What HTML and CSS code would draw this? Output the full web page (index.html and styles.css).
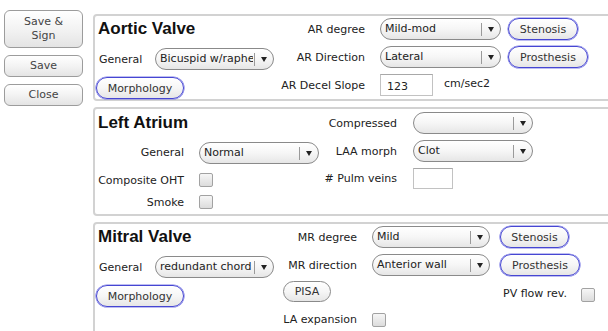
FILE: index.html
```html
<!DOCTYPE html>
<html lang="en">
<head>
    <meta charset="UTF-8">
    <meta name="viewport" content="width=device-width, initial-scale=1.0">
    <title>Echo Report</title>
    <link rel="stylesheet" href="styles.css">
</head>
<body>
    <div class="sidebar">
        <button class="side-btn tall">Save &amp;<br>Sign</button>
        <button class="side-btn">Save</button>
        <button class="side-btn">Close</button>
    </div>

    <div class="panels">
        <!-- Aortic valve -->
        <section class="panel panel-aortic">
            <div class="left">
                <h2 class="title">Aortic Valve</h2>
                <div class="field">
                    <span class="field-label">General</span>
                    <div class="select w119"><span class="value">Bicuspid w/raphe</span><span class="sep"></span><span class="arrow"></span></div>
                </div>
                <button class="pill focus morph">Morphology</button>
            </div>
            <div class="grid grid-aortic">
                <span class="lbl">AR degree</span>
                <div class="select w121"><span class="value">Mild-mod</span><span class="sep"></span><span class="arrow"></span></div>
                <button class="pill focus w70">Stenosis</button>

                <span class="lbl">AR Direction</span>
                <div class="select w121"><span class="value">Lateral</span><span class="sep"></span><span class="arrow"></span></div>
                <button class="pill focus w80">Prosthesis</button>

                <span class="lbl">AR Decel Slope</span>
                <div class="with-unit">
                    <input class="text-input w52" type="text" value="123">
                    <span class="unit">cm/sec2</span>
                </div>
            </div>
        </section>

        <!-- Left atrium -->
        <section class="panel panel-atrium">
            <div class="left left-wide">
                <h2 class="title">Left Atrium</h2>
                <div class="grid grid-atrium-left">
                    <span class="lbl lbl-top">General</span>
                    <div class="select w120 top"><span class="value">Normal</span><span class="sep"></span><span class="arrow"></span></div>

                    <span class="lbl">Composite OHT</span>
                    <span class="check"></span>

                    <span class="lbl">Smoke</span>
                    <span class="check"></span>
                </div>
            </div>
            <div class="grid grid-atrium">
                <span class="lbl">Compressed</span>
                <div class="select w120"><span class="value"></span><span class="sep"></span><span class="arrow"></span></div>

                <span class="lbl">LAA morph</span>
                <div class="select w120"><span class="value">Clot</span><span class="sep"></span><span class="arrow"></span></div>

                <span class="lbl"># Pulm veins</span>
                <input class="text-input w40" type="text" value="">
            </div>
        </section>

        <!-- Mitral valve -->
        <section class="panel panel-mitral">
            <div class="left">
                <h2 class="title">Mitral Valve</h2>
                <div class="field">
                    <span class="field-label">General</span>
                    <div class="select w119"><span class="value">redundant chord</span><span class="sep"></span><span class="arrow"></span></div>
                </div>
                <button class="pill focus morph">Morphology</button>
            </div>
            <div class="grid grid-mitral">
                <span class="lbl">MR degree</span>
                <div class="select w118"><span class="value">Mild</span><span class="sep"></span><span class="arrow"></span></div>
                <button class="pill focus w69 shift">Stenosis</button>

                <span class="lbl">MR direction</span>
                <div class="select w118"><span class="value">Anterior wall</span><span class="sep"></span><span class="arrow"></span></div>
                <button class="pill focus w80 shift">Prosthesis</button>

                <button class="pill pisa">PISA</button>
                <span></span>
                <div class="pv-flow">
                    <span>PV flow rev.</span>
                    <span class="check"></span>
                </div>

                <span class="lbl raise">LA expansion</span>
                <span class="check raise"></span>
            </div>
        </section>
    </div>
</body>
</html>
```

FILE: styles.css
```css
body {
    margin: 0;
    display: flex;
    align-items: flex-start;
    overflow: hidden;
    height: 331px;
    background: #fff;
    font-family: "Lucida Grande", "DejaVu Sans", sans-serif;
    font-size: 11px;
    color: #222;
}

button,
input {
    font-family: inherit;
    font-size: 11px;
    color: #333;
    padding: 0;
    margin: 0;
}

/* left column buttons */

.sidebar {
    flex: none;
    width: 79px;
    padding: 10px 0 0 4px;
    display: flex;
    flex-direction: column;
    gap: 7px;
}

.side-btn {
    height: 22px;
    border: 1px solid #9c9c9c;
    border-radius: 6px;
    background: linear-gradient(#ffffff, #f3f3f3 50%, #e4e4e4);
    color: #444;
    line-height: 14px;
}

.side-btn.tall {
    height: 38px;
}

/* panels */

.panels {
    flex: none;
    width: 540px;
    margin-left: 10px;
    padding-top: 14px;
    display: flex;
    flex-direction: column;
    gap: 6px;
}

.panel {
    box-sizing: border-box;
    display: flex;
    align-items: flex-start;
    border: 2px solid #d2d2d2;
    border-radius: 4px;
    background: #fff;
    padding-left: 1px;
}

.panel-aortic {
    height: 87px;
    padding-top: 2px;
}

.panel-atrium {
    height: 109px;
    padding-top: 3px;
}

.panel-mitral {
    height: 115px;
    padding-top: 2px;
}

.left {
    flex: none;
    width: 184px;
    display: flex;
    flex-direction: column;
    align-items: flex-start;
}

.left-wide {
    width: 223px;
}

.title {
    margin: 0;
    padding-left: 2px;
    height: 22px;
    font-family: "Liberation Sans", Arial, sans-serif;
    font-size: 17px;
    font-weight: bold;
    line-height: 22px;
    color: #111;
}

.field {
    display: flex;
    align-items: center;
    margin-top: 8px;
}

.field-label {
    box-sizing: border-box;
    width: 59px;
    padding-left: 3px;
}

.morph {
    margin-top: 7px;
    width: 88px;
    height: 21px;
}

/* grids */

.grid {
    display: grid;
    align-items: center;
    column-gap: 7px;
}

.lbl {
    text-align: right;
    white-space: nowrap;
}

.grid-aortic {
    grid-template-columns: 93px 121px auto;
    grid-auto-rows: 22px;
    row-gap: 6px;
}

.grid-aortic .lbl,
.grid-mitral .lbl {
    padding-right: 8px;
}

.with-unit {
    grid-column: span 2;
    display: flex;
    align-items: center;
}

.unit {
    margin-left: 11px;
    margin-top: -3px;
}

.grid-atrium-left {
    margin-top: 8px;
    grid-template-columns: 88px 120px;
    grid-template-rows: 27px 22px 22px;
    column-gap: 15px;
}

.grid-atrium-left .top {
    align-self: start;
}

.grid-atrium-left .lbl-top {
    align-self: start;
    line-height: 22px;
}

.grid-atrium {
    grid-template-columns: 87px 120px;
    grid-template-rows: 22px 22px 21px;
    row-gap: 6px;
}

.grid-atrium .lbl {
    padding-right: 9px;
}

.grid-mitral {
    grid-template-columns: 85px 118px auto;
    grid-template-rows: 22px 22px 22px 22px;
    row-gap: 6px;
}

.grid-mitral .raise {
    margin-top: -3px;
}

.shift {
    margin-left: 3px;
}

.pv-flow {
    display: flex;
    align-items: center;
    padding-left: 6px;
    margin-top: 1px;
}

.pv-flow .check {
    margin-left: 14px;
    margin-top: 3px;
}

/* controls */

.select {
    box-sizing: border-box;
    height: 22px;
    display: flex;
    align-items: center;
    border: 1px solid #8a8a8a;
    border-radius: 11px;
    background: linear-gradient(#ffffff, #f6f6f6 50%, #e6e6e6);
    color: #222;
}

.select .value {
    flex: 1;
    min-width: 0;
    overflow: hidden;
    white-space: nowrap;
    padding-left: 4px;
    line-height: 20px;
}

.select .sep {
    width: 1px;
    height: 13px;
    background: #9a9a9a;
    margin-left: 1px;
}

.select .arrow {
    width: 0;
    height: 0;
    margin: 1px 6px 0 6px;
    border-left: 3.5px solid transparent;
    border-right: 3.5px solid transparent;
    border-top: 5px solid #222;
}

.w118 { width: 118px; }
.w119 { width: 119px; }
.w120 { width: 120px; }
.w121 { width: 121px; }

.pill {
    box-sizing: border-box;
    height: 22px;
    border: 1px solid #8a8a8a;
    border-radius: 11px;
    background: linear-gradient(#ffffff, #f6f6f6 50%, #e6e6e6);
    color: #333;
    justify-self: start;
}

.pill.focus {
    border-color: #4646d2;
    box-shadow: 0 0 0 0.6px #7c7ce6;
}

.w69 { width: 69px; }
.w70 { width: 70px; }
.w80 { width: 80px; }

.pisa {
    width: 48px;
    height: 21px;
    margin-left: 3px;
    margin-top: -3px;
}

.text-input {
    box-sizing: border-box;
    height: 22px;
    border: 1px solid #c2c2c2;
    border-top-color: #a8a8a8;
    padding: 2px 0 0 6px;
    background: #fff;
    color: #222;
    outline: none;
}

.w52 { width: 53px; }

.w40 {
    width: 40px;
    height: 21px;
}

.check {
    box-sizing: border-box;
    width: 14px;
    height: 14px;
    border: 1px solid #a2a2a2;
    border-radius: 2px;
    background: linear-gradient(#f6f6f6, #dcdcdc);
    justify-self: start;
}
```
